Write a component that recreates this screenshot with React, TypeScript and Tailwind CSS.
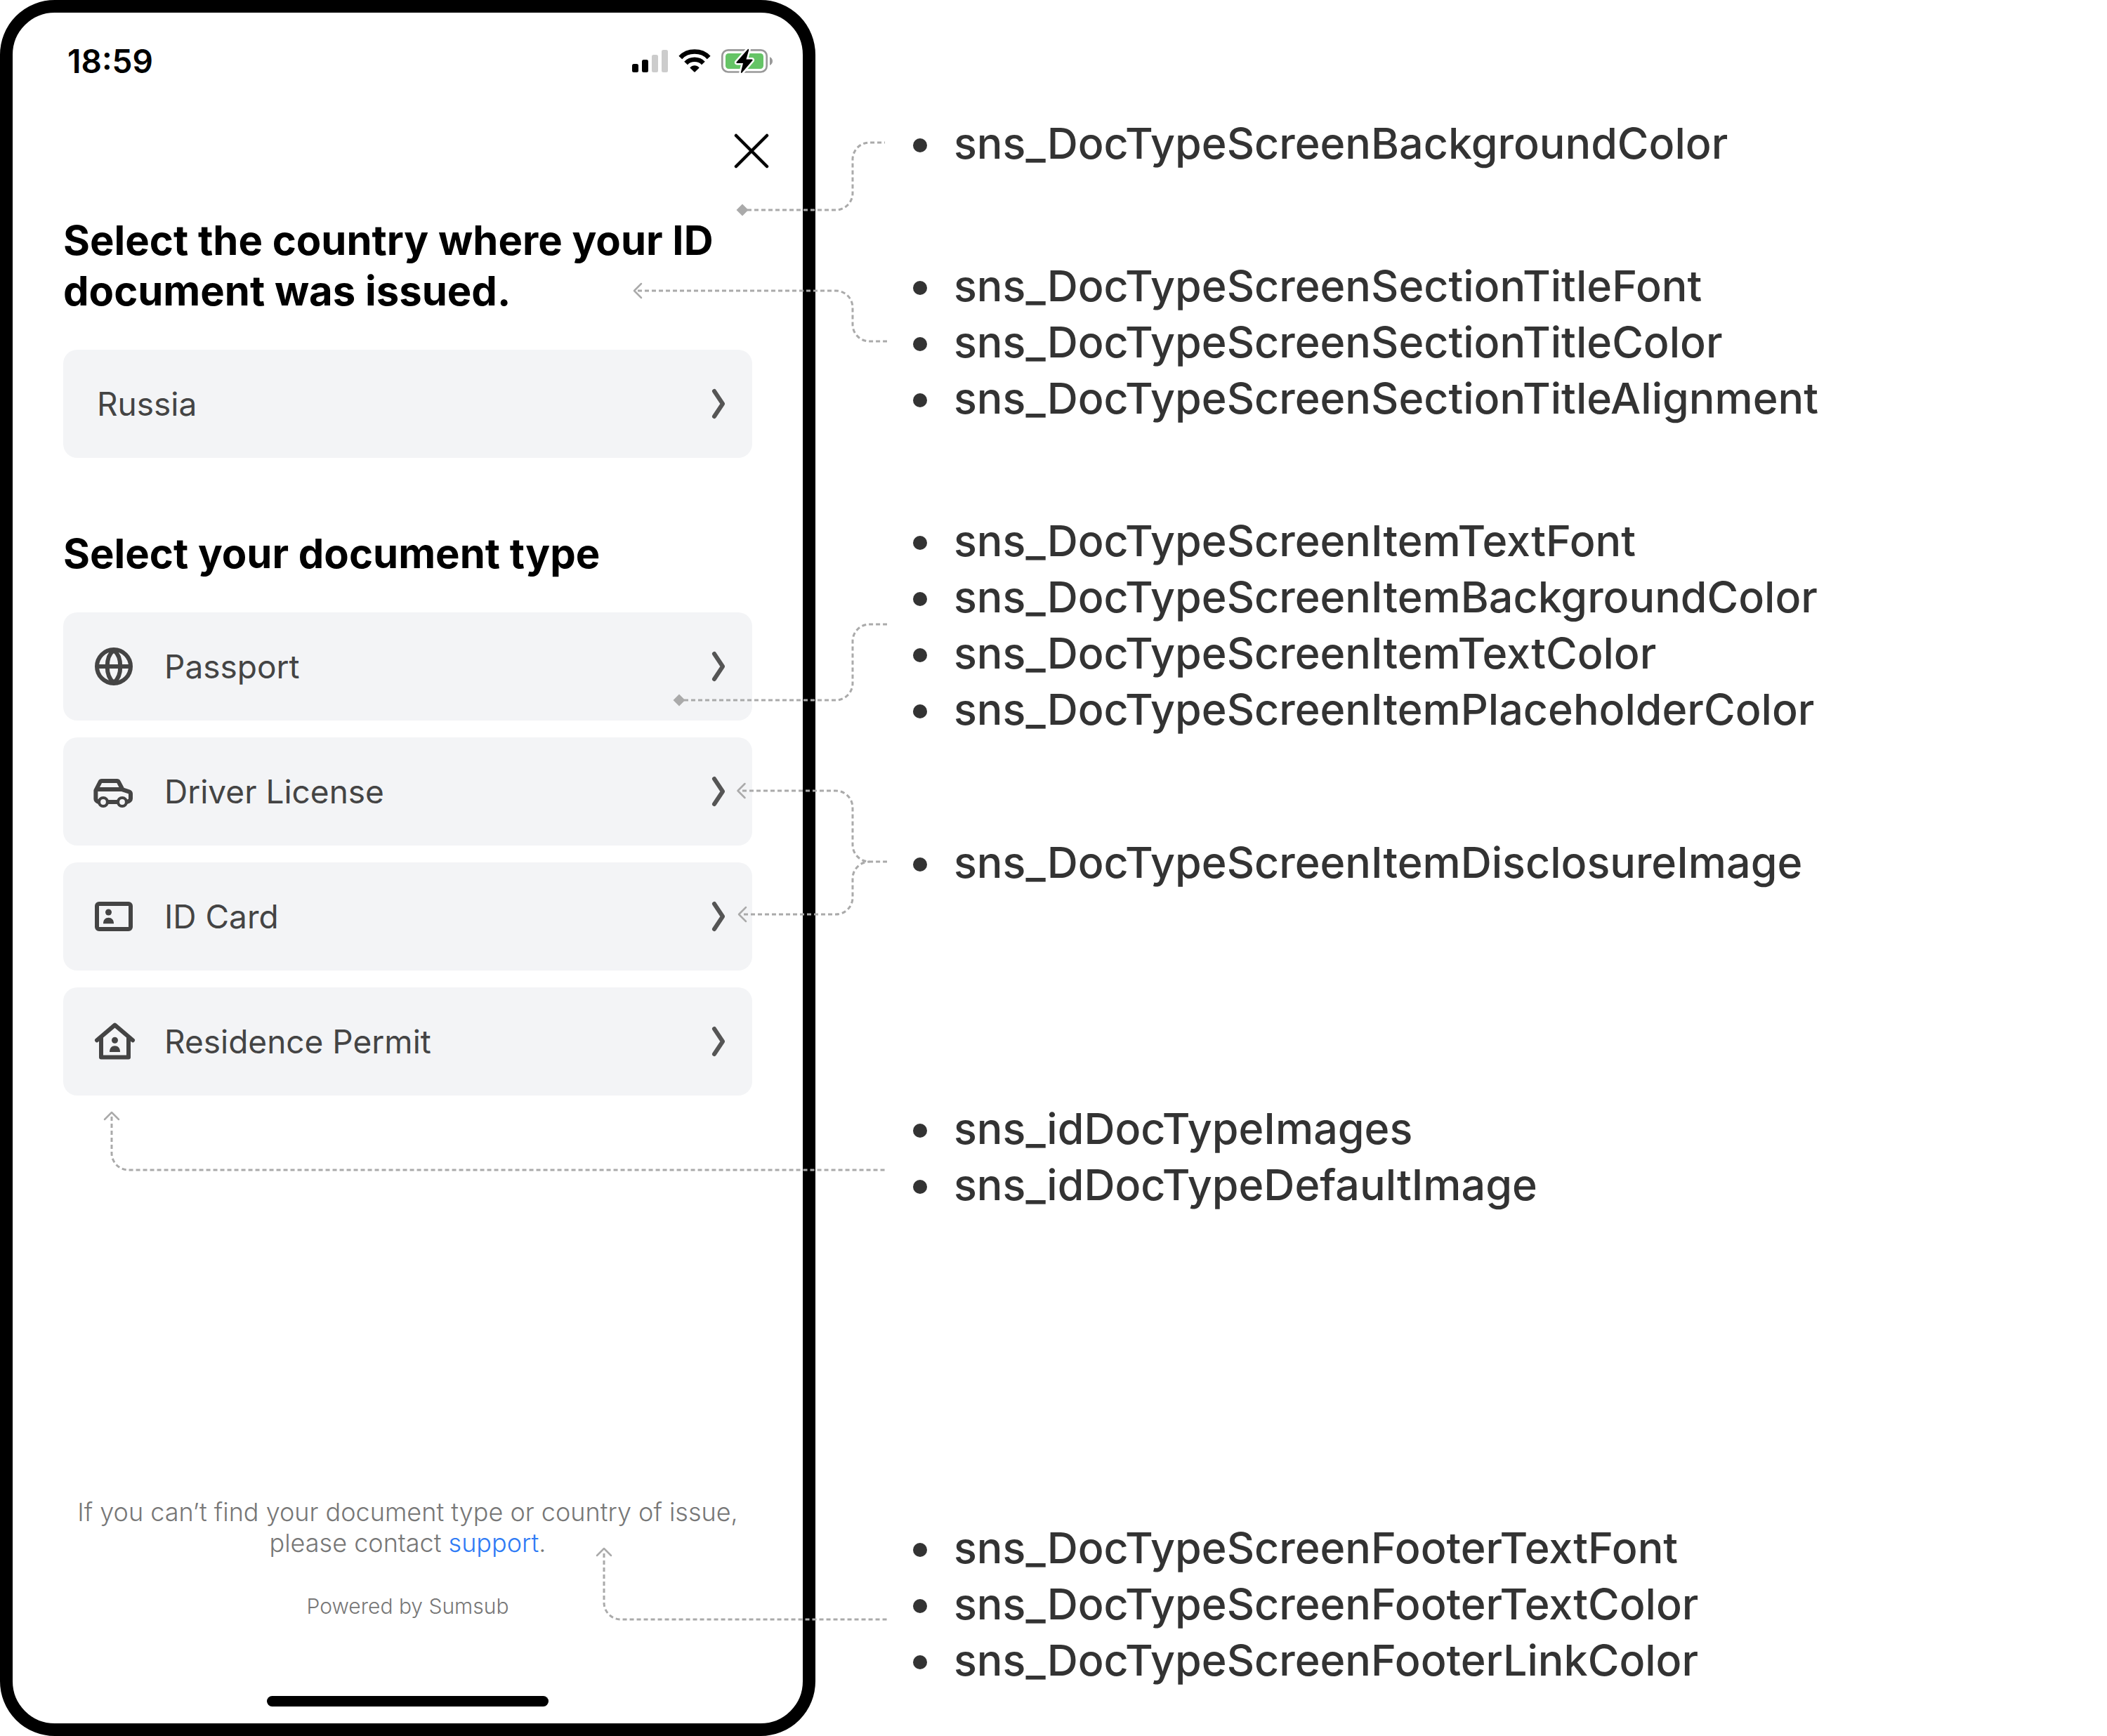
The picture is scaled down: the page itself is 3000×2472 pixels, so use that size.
import type { ReactNode } from "react";

const GlobeIcon = () => (
  <svg viewBox="0 0 24 24" className="size-[72px] shrink-0" fill="none" stroke="currentColor" strokeWidth="2" aria-hidden="true">
    <circle cx="12" cy="12" r="8" />
    <path d="M4 12h16" />
    <path d="M12 4.3C9.9 5.9 8.9 9 8.9 12s1 6.1 3.1 7.7C14.1 18.1 15.1 15 15.1 12S14.1 5.9 12 4.3Z" />
  </svg>
);

const CarIcon = () => (
  <svg viewBox="0 0 24 24" className="size-[72px] shrink-0" fill="none" stroke="currentColor" strokeWidth="2" strokeLinejoin="round" aria-hidden="true">
    <path d="M5 17C3.9 16.7 3.45 16.3 3.45 15.5V11.5L5.5 7.5C5.7 7.1 5.9 7 6.3 7H13.500C13.9 7 14.1 7.1 14.3 7.5L16.2 11.1L19.2 12.1C19.7 12.3 20 12.6 20 13.1V15.3C20 16.2 19.5 16.6 18 17" />
    <path d="M3.8 11H16M9 17h5" />
    <circle cx="7" cy="17" r="2" strokeWidth="1.4" />
    <circle cx="16" cy="17" r="2" strokeWidth="1.4" />
  </svg>
);

const CardIcon = () => (
  <svg viewBox="0 0 24 24" className="size-[72px] shrink-0" fill="none" stroke="currentColor" strokeWidth="2" aria-hidden="true">
    <rect x="4" y="6" width="16" height="12" rx="1" />
    <circle cx="9.5" cy="10" r="1.5" fill="currentColor" stroke="none" />
    <path d="M7 15.4C7 13.6 8 12.6 9.5 12.6S12 13.6 12 15.4Z" fill="currentColor" stroke="none" />
  </svg>
);

const HouseIcon = () => (
  <svg viewBox="0 0 24 24" className="size-[72px] shrink-0" fill="none" stroke="currentColor" strokeWidth="2" strokeLinecap="round" strokeLinejoin="round" aria-hidden="true">
    <path d="M4 11.4L12.5 4.2L21 11.4" />
    <path d="M6 10.5V19.5H19V10.5" />
    <circle cx="12.5" cy="11.4" r="1.5" fill="currentColor" stroke="none" />
    <path d="M10 17C10 15.1 11 14.1 12.5 14.1S15 15.1 15 17Z" fill="currentColor" stroke="none" />
  </svg>
);

const Chevron = () => (
  <svg viewBox="0 0 20 44" className="ml-auto h-11 w-5 shrink-0 text-[#555555]" fill="none" stroke="currentColor" strokeWidth="6" strokeLinecap="round" strokeLinejoin="round" aria-hidden="true">
    <path d="M4 4L16 22L4 40" />
  </svg>
);

function Row({ icon, label }: { icon?: ReactNode; label: string }) {
  return (
    <button
      type="button"
      className={
        "flex h-[154px] w-full items-center gap-9 rounded-[20px] bg-[#f3f4f6] pr-[38px] text-left text-[46px] text-[#444444] " +
        (icon ? "pl-9" : "pl-12")
      }
    >
      {icon}
      <span>{label}</span>
      <Chevron />
    </button>
  );
}

function StatusBar() {
  return (
    <div className="flex items-start justify-between pt-[42px] pr-[41px] pl-[78px]">
      <time className="text-[46px] leading-[54px] font-semibold">18:59</time>
      <svg viewBox="900 68 202 38" className="mt-2 h-[38px] w-[202px]" role="img" aria-label="Signal, Wi-Fi and battery charging">
        <rect x="900" y="91" width="9" height="12" rx="2.5" />
        <rect x="914" y="85" width="9" height="18" rx="2.5" />
        <rect x="928" y="78" width="9" height="25" rx="2.5" fill="#cccccc" />
        <rect x="942" y="71" width="9" height="32" rx="2.5" fill="#cccccc" />
        <g fill="none" stroke="#000" strokeWidth="6.5">
          <path d="M968.8 82C979 70.8 999 70.8 1009.2 82" />
          <path d="M976.6 90C983 83.1 995 83.1 1001.4 90" />
        </g>
        <path d="M982.3 96.5C986 92.3 992 92.3 995.7 96.5L989.8 102.3Q989 103 988.2 102.3Z" />
        <rect x="1028.3" y="71.3" width="63.4" height="31.2" rx="8.5" fill="none" stroke="#999999" strokeWidth="2.7" />
        <path d="M1096 81Q1100 83 1100 87T1096 93Z" fill="#999999" />
        <rect x="1033" y="76" width="54" height="22" rx="4.5" fill="#65c466" />
        <path d="M1064.8 70L1048.5 88.5Q1048 90 1049.5 90H1058L1054.8 103Q1055.3 104.5 1056.5 103.5L1071.5 86Q1072 84.5 1070.5 84.5H1062.5L1066.3 71Q1066 69.4 1064.8 70Z" stroke="#fff" strokeWidth="5" paintOrder="stroke" strokeLinejoin="round" />
      </svg>
    </div>
  );
}

function Phone() {
  return (
    <section className="flex w-full max-w-[1161px] flex-col rounded-[78px] border-18 border-black bg-white text-black">
      <StatusBar />
      <div className="flex justify-end pt-[72px] pr-11">
        <button type="button" aria-label="Close" className="p-1">
          <svg viewBox="0 0 50 50" className="size-[50px]" fill="none" stroke="currentColor" strokeWidth="4.5" strokeLinecap="round" aria-hidden="true">
            <path d="M3 3L47 47M47 3L3 47" />
          </svg>
        </button>
      </div>
      <div className="px-[72px] pt-[62px]">
        <h2 className="text-[58px] leading-[72px] font-bold">Select the country where your ID document was issued.</h2>
        <div className="mt-12">
          <Row label="Russia" />
        </div>
        <h2 className="mt-[100px] text-[58px] leading-[72px] font-bold">Select your document type</h2>
        <div className="mt-12 flex flex-col gap-6">
          <Row icon={<GlobeIcon />} label="Passport" />
          <Row icon={<CarIcon />} label="Driver License" />
          <Row icon={<CardIcon />} label="ID Card" />
          <Row icon={<HouseIcon />} label="Residence Permit" />
        </div>
      </div>
      <footer className="mt-auto flex flex-col items-center px-[72px] pb-6 text-center font-light text-[#777777]">
        <p className="text-4xl leading-[44px]">
          If you can’t find your document type or country of issue,
          <br />
          please contact{" "}
          <a href="#support" className="text-[#2f7bf5]">
            support
          </a>
          .
        </p>
        <p className="mt-[50px] text-[30px] leading-9">Powered by Sumsub</p>
        <div className="mt-[110px] h-[15px] w-[401px] rounded-full bg-black" />
      </footer>
    </section>
  );
}

function Notes({ items, className }: { items: string[]; className?: string }) {
  return (
    <ul className={className}>
      {items.map((item) => (
        <li key={item} className="flex items-center gap-[38px] text-[61px] leading-[80px] font-medium">
          <span className="mt-1.5 size-5 rounded-full bg-[#333333]" />
          {item}
        </li>
      ))}
    </ul>
  );
}

function Connectors() {
  return (
    <svg viewBox="0 0 1280 2472" className="pointer-events-none absolute top-0 left-0 h-[2472px] w-[1280px]" fill="none" stroke="#aaaaaa" strokeWidth="3" aria-hidden="true">
      <g strokeDasharray="6 4">
        <path d="M1064 299H1190A24 24 0 0 0 1214 275V227A24 24 0 0 1 1238 203H1260" />
        <path d="M908 414H1190A24 24 0 0 1 1214 438V462A24 24 0 0 0 1238 486H1263" />
        <path d="M974 997H1190A24 24 0 0 0 1214 973V913A24 24 0 0 1 1238 889H1263" />
        <path d="M1057 1126H1190A24 24 0 0 1 1214 1150V1203A24 24 0 0 0 1238 1227H1263" />
        <path d="M1059 1302H1190A24 24 0 0 0 1214 1278V1251A24 24 0 0 1 1238 1227" />
        <path d="M159 1590V1642A24 24 0 0 0 183 1666H1263" />
        <path d="M860 2212V2282A24 24 0 0 0 884 2306H1263" />
      </g>
      <g strokeWidth="2.5" strokeLinecap="round" strokeLinejoin="round">
        <path d="M913 404L903 414L913 424" />
        <path d="M1060.5 1116L1050.5 1126L1060.5 1136" />
        <path d="M1062 1292L1052 1302L1062 1312" />
        <path d="M149 1594L159 1584L169 1594" />
        <path d="M850 2215L860 2205L870 2215" />
      </g>
      <g fill="#aaaaaa" stroke="none">
        <path d="M1057 290.5L1065.5 299L1057 307.5L1048.5 299Z" />
        <path d="M967 988.5L975.5 997L967 1005.5L958.5 997Z" />
      </g>
    </svg>
  );
}

export default function App() {
  return (
    <main className="relative flex min-h-screen bg-white font-['Inter',sans-serif]">
      <Phone />
      <aside className="flex flex-1 flex-col pt-[164px] pl-[139px] text-[#333333]">
        <Notes items={["sns_DocTypeScreenBackgroundColor"]} />
        <Notes
          className="mt-[123px]"
          items={["sns_DocTypeScreenSectionTitleFont", "sns_DocTypeScreenSectionTitleColor", "sns_DocTypeScreenSectionTitleAlignment"]}
        />
        <Notes
          className="mt-[123px]"
          items={[
            "sns_DocTypeScreenItemTextFont",
            "sns_DocTypeScreenItemBackgroundColor",
            "sns_DocTypeScreenItemTextColor",
            "sns_DocTypeScreenItemPlaceholderColor",
          ]}
        />
        <Notes className="mt-[138px]" items={["sns_DocTypeScreenItemDisclosureImage"]} />
        <Notes className="mt-[299px]" items={["sns_idDocTypeImages", "sns_idDocTypeDefaultImage"]} />
        <Notes
          className="mt-[437px]"
          items={["sns_DocTypeScreenFooterTextFont", "sns_DocTypeScreenFooterTextColor", "sns_DocTypeScreenFooterLinkColor"]}
        />
      </aside>
      <Connectors />
    </main>
  );
}
